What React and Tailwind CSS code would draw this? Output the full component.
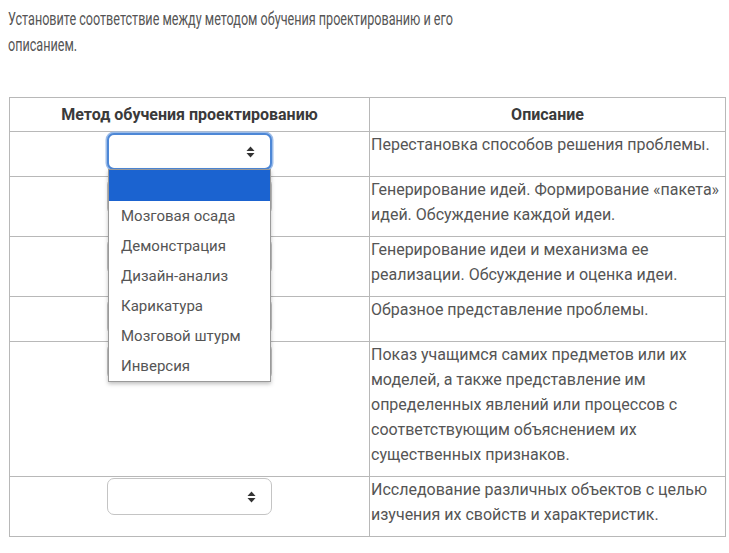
import React from "react";

const rows = [
  ["Перестановка способов решения проблемы."],
  ["Генерирование идей. Формирование «пакета» идей. Обсуждение каждой идеи."],
  ["Генерирование идеи и механизма ее реализации. Обсуждение и оценка идеи."],
  ["Образное представление проблемы."],
  [
    "Показ учащимся самих предметов или их моделей, а также представление им определенных явлений или процессов с соответствующим объяснением их существенных признаков.",
  ],
  ["Исследование различных объектов с целью изучения их свойств и характеристик."],
];

const options = [
  "Мозговая осада",
  "Демонстрация",
  "Дизайн-анализ",
  "Карикатура",
  "Мозговой штурм",
  "Инверсия",
];

function Arrows() {
  return (
    <svg width="9" height="12" viewBox="0 0 9 12" className="absolute right-[15px] top-1/2 -translate-y-1/2">
      <path d="M4.5 0.5 L8.5 5 L0.5 5 Z" fill="#333" />
      <path d="M4.5 11.5 L8.5 7 L0.5 7 Z" fill="#333" />
    </svg>
  );
}

function Select({ open }) {
  if (open) {
    return (
      <div className="relative inline-block w-[165px] h-[37px] rounded-[7px] border-2 border-[#4d87d6] shadow-[0_0_0_1.5px_#9dbde9] bg-white align-top">
        <Arrows />
        <div className="absolute left-[-1px] top-[calc(100%+1px)] w-[163px] bg-white border border-[#9a9a9a] shadow-[0_2px_4px_rgba(0,0,0,0.25)] z-10 text-left">
          <div className="h-[31px] bg-[#1b63d0]" />
          {options.map((o) => (
            <div key={o} className="h-[30px] pl-[12px] text-[15px] leading-[30px] text-[#555]">
              {o}
            </div>
          ))}
        </div>
      </div>
    );
  }
  return (
    <div className="relative inline-block w-[165px] h-[37px] rounded-[7px] border border-[#c4c4c4] bg-white align-top">
      <Arrows />
    </div>
  );
}

export default function App() {
  return (
    <div className="w-[729px] h-[553px] overflow-hidden bg-white font-['Roboto',sans-serif] text-[#555]">
      <div className="pl-[8px] pt-[6px] h-[97px]">
        <div className="origin-left scale-x-[0.70] text-[18px] leading-[26px] whitespace-nowrap text-[#555]">
          Установите соответствие между методом обучения проектированию и его
          <br />
          описанием.
        </div>
      </div>
      <table className="ml-[9px] w-[717px] table-fixed border-collapse border border-[#b8b8b8]">
        <colgroup>
          <col className="w-[360px]" />
          <col />
        </colgroup>
        <thead>
          <tr className="h-[34px]">
            <th className="border border-[#b8b8b8] text-center text-[16px] font-bold text-[#3a3a3a]">
              Метод обучения проектированию
            </th>
            <th className="border border-[#b8b8b8] text-center text-[16px] font-bold text-[#3a3a3a]">
              Описание
            </th>
          </tr>
        </thead>
        <tbody>
          {rows.map((r, i) => (
            <tr key={i}>
              <td className="border border-[#b8b8b8] align-top text-center pt-[1px] pb-[6px]">
                <Select open={i === 0} />
              </td>
              <td className="border border-[#b8b8b8] align-top pl-[1px] pr-0 pt-0 pb-[9px] text-[16px] leading-[25px] text-[#555]">
                {r[0]}
              </td>
            </tr>
          ))}
        </tbody>
      </table>
    </div>
  );
}
